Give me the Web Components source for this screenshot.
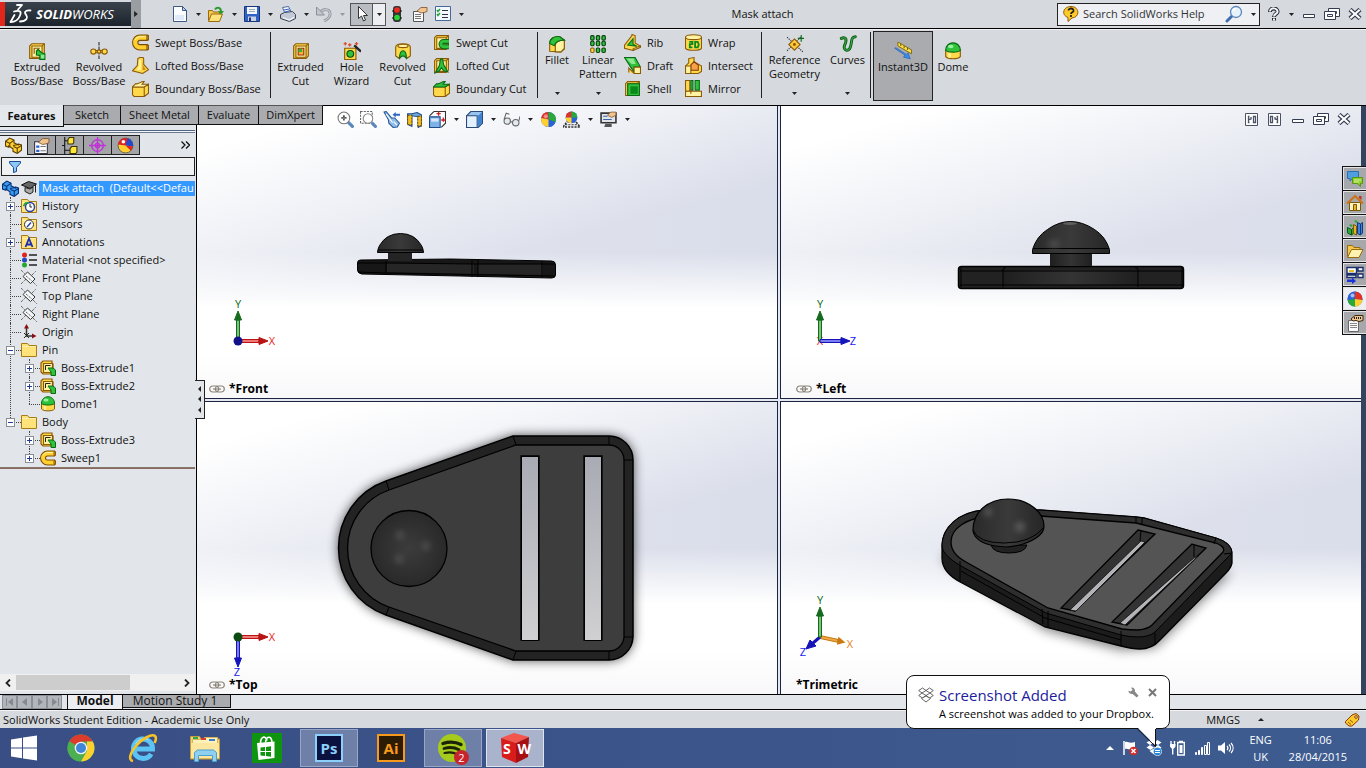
<!DOCTYPE html>
<html lang="en">
<head>
<meta charset="utf-8">
<title>Mask attach - SolidWorks</title>
<style>
html,body{margin:0;height:100%}
body{font:11px/14px "Open Sans","Noto Sans",sans-serif;color:#111;background:#d6d9dd;overflow:hidden}
</style>
</head>
<body>
<cad-app></cad-app>
<script>
/* ---------- helpers ---------- */
const RESET = `*{box-sizing:border-box}
button{font:inherit;color:inherit;background:none;border:0;padding:0;margin:0;text-align:center}
sw-icon{flex:none}`;
function define(tag, css, html) {
  customElements.define(tag, class extends HTMLElement {
    constructor() {
      super();
      const root = this.attachShadow({ mode: 'open' });
      const t = document.createElement('template');
      t.innerHTML = '<style>' + RESET + css + '</style>' + (typeof html === 'function' ? html(this) : html);
      root.appendChild(t.content.cloneNode(true));
    }
  });
}

/* ---------- icons ---------- */
const Y = 'fill="#ffd94a" stroke="#8b5a08"', YL = 'fill="#fff2a0" stroke="#8b5a08"', YD = 'fill="#d99a1c" stroke="#8b5a08"';
const G = 'fill="#2fc23a" stroke="#0a6a18"', N = 'fill="none"';
const BOX = `<path ${Y} d="M1.500 3.500l2-2h11v11l-2 2h-11z"/><path ${YL} d="M3.500 3.500h9v10h-9z"/><path ${N} stroke="#8b5a08" d="M12.500 3.500l2-2"/>`;
const FOLDER = `<path fill="#ffe27a" stroke="#a87b14" d="M.5 1.500h6l1.500 2h7.500v11H.5z"/><path fill="#fff0a8" d="M1 4h14v1H1z"/>`;
const HAND = `<path fill="#f0c48c" stroke="#7a5230" stroke-width=".8" d="M5 5l4-3.500h6v4l-3 1-3 .5-2-1z"/>`;
const ICONS = {
  down: [5, 3, '<path fill="#222" d="M0 0h5L2.500 3z"/>'],
  downg: [5, 3, '<path fill="#999" d="M0 0h5L2.500 3z"/>'],
  up: [6, 3, '<path fill="#222" d="M0 3h6L3 0z"/>'],
  upw: [8, 4, '<path fill="#fff" d="M0 4h8L4 0z"/>'],
  right: [5, 8, '<path fill="#222" d="M0 0v8l5-4z"/>'],
  left: [3, 6, '<path fill="#222" d="M3 0v6L0 3z"/>'],
  ds: [24, 24, '<g fill="none" stroke="#fff" stroke-width="1.800" stroke-linecap="round" stroke-linejoin="round"><path d="M8 3h5l-4 4.500"/><path d="M5 9.500c5-1.500 8-.5 6 4-1.500 4-5 6.500-9.500 6.500l4-7"/><path d="M21.500 8.500c-4-.5-6.500 1-5 3.500s2.500 3 1 5-4 2.500-6.500 2.500"/></g>'],
  extrude: [16, 16, BOX + `<path ${N} stroke="#8b5a08" d="M5.500 10.500v-5h5"/><path ${G} d="M7.500 8l1.500-1.500 3 3 3 1v5h-4.500v-3.500l-3-.5z"/><path fill="#8be88e" d="M11.500 11.500h3v3h-3z"/>`],
  revolve: [16, 16, '<path stroke="#333" stroke-dasharray="3 1" d="M8 0v16"/><g fill="#ffd94a" stroke="#8b5a08"><path d="M3 7.500h10v2H3z"/><circle cx="3" cy="8.500" r="2.300"/><circle cx="13" cy="8.500" r="2.300"/><circle cx="8" cy="8.500" r="1.500"/></g>'],
  sweep: [16, 16, `<path ${N} stroke="#7a4d06" stroke-width="6" d="M15 3.500H7.500a4.500 4.500 0 000 9H15"/><path ${N} stroke="#ffd030" stroke-width="4" d="M14.500 3.500H7.500a4.500 4.500 0 000 9h7"/><path ${N} stroke="#fff3a0" d="M13 2.500H7a5 5 0 00-4 3"/><path ${YD} d="M14 1.500h1.500v4H14zM14 10.500h1.500v4H14z"/>`],
  loft: [16, 16, `<path ${Y} d="M5.500 1.500l2-1h3l.5 1.500v5l4.500 5-5.500 3.500-9.500-2.500 4.500-5z"/><path fill="#fff3a0" d="M6.500 2.500h2V12l-4 .5 2-4z"/><path fill="#c98a10" d="M10 2.500v10l3-.5-2.500-4z"/>`],
  boundary: [16, 16, `<path ${Y} d="M.5 6.500h11v9H2l-1.500-1.500zM11.500 6.500l4-2.500v8.500l-4 3"/><path ${YL} d="M.5 6.500l3-3c3 1 5-3 8-2l-2 2.500h6l-4 2.500z"/>`],
  cutx: [16, 16, BOX + '<path fill="#f7b733" stroke="#9a2a10" d="M5.500 5.500h5v6h-5z"/><path fill="#2fb53a" d="M6 6h3v3H6z"/>'],
  hole: [16, 16, '<path fill="#ffd94a" stroke="#8b5a08" d="M1.500 5.500h10v10h-10z"/><circle cx="6.500" cy="10.500" r="3" fill="#2fc23a" stroke="#0a4d10"/><path stroke="#222" stroke-width="2" d="M10 3l6 5.500"/><path stroke="#e0401c" d="M2 0v3M.5 1.500h3M6 1v3M4.500 2.500h3M12 0v3M10.500 1.500h3"/>'],
  revcut: [16, 16, `<path ${Y} d="M1.500 4.500c0-4 13-4 13 0v8l-3 2-2-5h-3l-2 5-3-2z"/><ellipse cx="8" cy="3.500" rx="4.500" ry="1.500" ${YL}/><path ${G} d="M5 14.500c0-9 6-9 6 0l-2-2H7z"/>`],
  sweepcut: [16, 16, BOX + '<path fill="none" stroke="#0a6a18" stroke-width="4.600" d="M15 7h-5a2.500 2.500 0 000 5h5"/><path fill="none" stroke="#2fc23a" stroke-width="2.600" d="M15 7h-5a2.500 2.500 0 000 5h5"/>'],
  loftcut: [16, 16, BOX + `<path ${G} d="M7 2h2l1 5 4 7-4-1-2-3-2 3-4 2 4-7z"/>`],
  boundcut: [16, 16, `<path ${Y} d="M.5 6.500h11v9H2l-1.500-1.500zM11.500 6.500l4-2.500v8.500l-4 3"/><path ${G} d="M.5 6.500l3-3c3 1 5-3 8-2l-2 2.500h6l-4 2.500z"/>`],
  fillet: [16, 16, `<path ${Y} d="M1.500 14.500v-7c0-4 4-7 9-6l4 3v8l-3 2.500z"/><path ${YL} d="M6.500 15V9c0-2 2-4 8-4.500V12l-3 3z"/><path ${G} d="M1.500 7.500c0-4 4-7 9-6l4 3c-5 0-8 1.500-9 5z"/>`],
  pattern: [16, 16, [1, 6, 11].map(x => [0, 5, 11].map(y => `<rect x="${x + .5}" y="${y + .5}" width="3" height="4" rx="1" ${x === 1 && y === 11 ? 'fill="#ffd94a" stroke="#8b5a08"' : 'fill="#2fc23a" stroke="#0a4010"'}/>`).join('')).join('')],
  rib: [16, 16, `<path ${Y} d="M.5 10.500l7-9v-1l3 1v7l5 3-7 4-8-2z"/><path ${G} d="M3.500 10.500l5-6v5l3.500 2z"/><path ${YL} d="M8.500 14l7-3v1.500l-7 3z"/>`],
  draft: [16, 16, `<path ${G} d="M.5.5h10l5 9h-6v5z"/><path fill="#8be88e" d="M2 1.500h7l2 5H7z"/><path ${YL} d="M9.500 9.500h6v6h-6z"/><path ${Y} d="M9.500 15.500l-5-5v4"/>`],
  shell: [16, 16, BOX + `<path ${G} d="M3.500 3.500h11v11h-11z"/><path fill="#0a8a1c" d="M6 6h7v7H6z"/>`],
  wrap: [16, 16, `<path ${Y} d="M.5 2.500v11c2 2.500 13 2.500 15 0v-11"/><ellipse cx="8" cy="3" rx="7.500" ry="2.300" ${YL}/><path fill="none" stroke="#0a8a1c" stroke-width="1.700" d="M4 7.500h3v2H4.500v3H7M9.500 12.500v-5h2.500l1 2.500-1 2.500z"/>`],
  intersect: [16, 16, `<path ${Y} d="M.5 8.500l3-3v-4l5-1v4l7 4v5l-3 2H.5z"/><path fill="#f5a24a" stroke="#8b3a08" d="M5.500 7.500l3-3 4 3v5h-7z"/><path ${YL} d="M.5 8.500h5v7h-5z"/>`],
  mirror: [16, 16, `<path ${Y} d="M.5.5h4v10h-4z"/><path ${G} d="M5.500.5h2v9h-2zM9.500.5h4v9h-4z"/><path ${YL} d="M.5 10.500h15v5H.5zM5.500 8v5"/>`],
  refgeo: [16, 16, '<path stroke="#333" stroke-dasharray="1 1" d="M1 2l14 13M1 14L13 2"/><path fill="#ffc93a" stroke="#8b5a08" d="M7.500 3.500l5 5-5 5-5-5z"/><circle cx="7.500" cy="8.500" r="1.300" fill="#8b5a08"/><path stroke="#0a6a1c" d="M13.500 0v6M10.500 3h6"/>'],
  curves: [16, 16, '<path fill="none" stroke="#0b5c14" stroke-width="2.600" stroke-linecap="round" d="M2 3c5-2 5 2 3 6-2 5 4 6 5 2 2-5 0-9 4.500-9.500"/><path fill="none" stroke="#35a845" stroke-width="1" stroke-linecap="round" d="M2 3c5-2 5 2 3 6-2 5 4 6 5 2 2-5 0-9 4.500-9.500"/>'],
  instant: [16, 16, '<path fill="#ffe34a" stroke="#7a6208" stroke-width=".8" d="M3.500 0l12 7v3.500l-12-7z"/><path stroke="#7a6208" d="M6 1.500v2M9 3.500v2M12 5v2"/><path fill="#3a8ae8" stroke="#1a5ab0" stroke-width=".5" d="M.5 5.500l9 6-1 2 6 1.500-2-5.500-1.500 1.500-9.500-6z"/>'],
  dome: [16, 16, `<path ${Y} d="M1.500 7v6c2 2.500 11 2.500 13 0V7z"/><path ${G} d="M1.500 7.500c0-9 13-9 13 0-2 2-11 2-13 0z"/><ellipse cx="6" cy="4" rx="2.500" ry="1.500" fill="#9af29e"/><path fill="#fff3a0" d="M4 10h2v4H4z"/>`],
  newdoc: [16, 16, '<path fill="#fdfeff" stroke="#3d5a86" d="M1.500.5h9l4 4v11h-13z"/><path fill="#bcd2ee" stroke="#3d5a86" d="M10.500.5v4h4z"/><path fill="#dfeaf8" d="M3 9h9v5H3z"/>'],
  open: [16, 16, '<path fill="#f5c74a" stroke="#9a6a10" d="M.5 14.500v-10h4l1 1.500h6v3"/><path fill="#ffe27a" stroke="#9a6a10" d="M.5 15.500l3-7.500h11l-3 7.500z"/><path fill="none" stroke="#2a9a2e" stroke-width="2" d="M7 3.500c2-3 6-2 6 2"/><path fill="#2a9a2e" d="M10 5h6l-3 3.500z"/>'],
  save: [16, 16, '<path fill="#2f62c4" stroke="#16357c" d="M.5.5h15v15H.5z"/><path fill="#f4f7fc" d="M3 1h10v7H3z"/><path stroke="#9ab" d="M5 3.500h6M5 5.500h6"/><path fill="#c8d2e4" d="M4 10.500h8V15H4z"/><path fill="#16357c" d="M5 11.500h2V15H5z"/>'],
  print: [16, 16, '<path fill="#fff" stroke="#4a6a9a" d="M2.500 1.500l6-1 3 6-6 2z"/><path fill="#c3cad6" stroke="#3c4556" d="M.5 8.500l4-2 8-1 3 3v4l-6 3-9-3z"/><path fill="#fff" d="M3 11l6 2.500 5-2.500v1l-5 2.500-6-2.500z"/><path stroke="#2f62c4" d="M4 4l5-1M5 6l5-1.500"/>'],
  undo: [16, 16, '<path fill="none" stroke="#989ca4" stroke-width="3" d="M3.500 7c4-5 10-4 10.500 0 .5 3.500-2.500 6.500-6 8"/><path fill="none" stroke="#d6d9dd" d="M3.500 7c4-5 10-4 10.500 0 .5 3.500-2.500 6.500-6 8"/><path fill="#c3c6cc" stroke="#8b8f97" d="M.5 1v8h8z"/>'],
  pointer: [16, 16, '<path fill="#fff" stroke="#333" d="M4.500.5v12l3-2.500 2 5 2-1-2-4.500h4z"/>'],
  light: [16, 16, '<rect x="4" y="0" width="8" height="16" rx="3" fill="#333"/><circle cx="8" cy="4" r="2.800" fill="#f02a1e"/><circle cx="8" cy="11.500" r="2.800" fill="#26d436"/><path stroke="#111" d="M3 5h2M11 5h2M3 12h2M11 12h2"/>'],
  props: [16, 16, '<path fill="#fafafa" stroke="#555" d="M1.500 5.500h10v10h-10z"/><path stroke="#777" d="M3 8.500h6M3 10.500h6M3 12.500h6"/>' + HAND],
  options: [16, 16, '<path fill="#f4f8ff" stroke="#47689a" d="M.5.5h15v14H.5z"/><path stroke="#26a436" stroke-width="1.500" fill="none" d="M2 4l1 1.500L5 3M2 8l1 1.500L5 7"/><path stroke="#334" d="M7 4.500h6M7 8.500h6M7 11.500h6"/>'],
  helpball: [16, 16, '<path fill="#ffc928" stroke="#8b5a08" d="M8 .5c9 0 9 11 1 11.500l-4 3.500v-4C-2 9 0 .5 8 .5z"/><path fill="none" stroke="#222" stroke-width="1.800" d="M5.500 4.500c0-3 5.500-2.500 5 .5-.3 1.500-2.500 1-2.500 3M8 9v2"/>'],
  magnify: [18, 18, '<path stroke="#3f6fae" stroke-width="3" stroke-linecap="round" d="M2 16l5-5"/><circle cx="11" cy="7" r="5.500" fill="#e6f2fc" stroke="#5b86b8" stroke-width="1.300"/><path fill="none" stroke="#fff" stroke-width="1.500" d="M8 6c.5-1.500 2-2.500 3-2.500"/>'],
  help: [12, 14, '<path fill="none" stroke="#222a38" stroke-width="4" d="M2 5c0-5 8-4.500 7.500 0C9 7 6 7 6 10M6 11v2.500"/><path fill="none" stroke="#f4f6fa" stroke-width="2" d="M2 4.500c0-4.500 8-4 7.500.5C9 7 6 7 6 9.500M6 11.500v2"/>'],
  min: [12, 8, '<path fill="#fff" stroke="#333c50" d="M.5 4.500h11v3H.5z"/>'],
  restore: [16, 12, '<path fill="#fff" stroke="#333c50" d="M4.500.5h11v8h-11zM7.500 3.500h5v2h-5z"/><path fill="#fff" stroke="#333c50" d="M.5 3.500h11v8H.5zM3.500 6.500h5v2h-5z"/>'],
  close: [14, 12, '<path stroke="#333c50" stroke-width="4.400" d="M2 1.500l10 9M12 1.500l-10 9"/><path stroke="#fff" stroke-width="2.200" d="M2.300 1.800l9.400 8.400M11.700 1.800l-9.400 8.400"/>'],
  tileL: [13, 13, '<path fill="#fff" stroke="#4a5264" d="M.5.500h12v12H.5z"/><path fill="none" stroke="#4a5264" stroke-width="1.300" d="M4.500 3.500h-1v6h1M6 4v2l-2 .5M8.500 3.500h2v6h-2z"/>'],
  tileR: [13, 13, '<path fill="#fff" stroke="#4a5264" d="M.5.500h12v12H.5z"/><path fill="none" stroke="#4a5264" stroke-width="1.300" d="M8.500 3.500h1v6h-1M7 4v2l2 .5M2.500 3.500h2v6h-2z"/>'],
  part: [16, 16, '<path fill="#ffd030" stroke="#5a3d04" d="M.5 4l4-3 4 2v2.500l4 2V6.500l3 1v5l-4 3-4-2V11l-4-2.500v1.200L.5 8.500z"/><path fill="none" stroke="#5a3d04" d="M.5 4l4 2 4-3M4.500 6v3M7.500 8l5-1M11.500 10.500v4.500M8 9l3.500 1.500 4-2.500"/>'],
  partblue: [16, 16, '<path fill="#3a9cf0" stroke="#0a2f78" d="M.5 4l4-3 4 2v2.500l4 2V6.500l3 1v5l-4 3-4-2V11l-4-2.500v1.200L.5 8.500z"/><path fill="none" stroke="#0a2f78" d="M.5 4l4 2 4-3M4.500 6v3M7.500 8l5-1M11.500 10.500v4.500M8 9l3.500 1.500 4-2.500"/>'],
  cap: [16, 16, '<path fill="#666" stroke="#111" d="M.5 5l7-3.500 8 2.500-6.500 4.500z"/><path fill="#aaa" stroke="#222" d="M4 7.500v4l5 2.500 3-2V7L9 9z"/><path stroke="#222" d="M14.500 4.500v8"/>'],
  proptab: [16, 16, '<path fill="#fafafa" stroke="#334" d="M1.500 4.500h12v11h-12z"/><path fill="#2f62c4" d="M3 8h3v2H3zM3 12h3v2H3z"/><path stroke="#777" d="M7 9h5M7 13h5"/>' + HAND],
  config: [16, 16, `<path ${N} stroke="#111" d="M3.500 0v16M3.500 3.500H7M3.500 12.500H9M1 8h3"/><path fill="#ffe63a" stroke="#3a3204" d="M6.500 2.500l1.500-2h4v5l-1 1H6.500z"/><path fill="#ffe63a" stroke="#3a3204" d="M8.500 11l1.500-2h5v5l-1 1.500H8.500z"/>`],
  dimx: [16, 16, '<g fill="none" stroke="#c032d8" stroke-width="1.300"><circle cx="8" cy="8" r="5.500"/><circle cx="8" cy="8" r="2"/><path d="M8 0v16M0 8h16"/></g>'],
  ball: [16, 16, '<circle cx="8" cy="8" r="7" fill="#2a62d8"/><path fill="#e23222" d="M8 8L1.200 6.500A7 7 0 018 1z"/><path fill="#2aa83a" d="M8 8V1a7 7 0 016.500 9.500z"/><path fill="#2a62d8" d="M8 8l6.500 2.500A7 7 0 018 15z"/><path fill="#ffd030" d="M8 8v7a7 7 0 01-6.800-8.500z"/><circle cx="5.500" cy="5" r="2" fill="#fff" opacity=".45"/>'],
  ballb: [16, 16, '<circle cx="8" cy="8" r="7.500" fill="#2a62d8"/><path fill="#2a62d8" d="M8 8L.6 9A7.500 7.500 0 018 .5z"/><path fill="#e23222" d="M8 8V.5A7.500 7.500 0 0115.400 9z"/><path fill="#ffd030" d="M8 8l7.400 1A7.500 7.500 0 018 15.500z"/><path fill="#2aa83a" d="M8 8v7.500A7.500 7.500 0 01.6 9z"/><circle cx="5.500" cy="4.500" r="2" fill="#fff" opacity=".6"/>'],
  ballry: [16, 16, '<circle cx="8" cy="8" r="7" fill="#ffd030" stroke="#333" stroke-width=".6"/><path fill="#e02222" d="M8 8L1 7a7 7 0 017-6c3 0 4 3 4 4z"/><path fill="#2348c8" d="M8 8l2-7a7 7 0 015 8z"/><path fill="#e02222" d="M8 8l7 1-2 4z"/><circle cx="6" cy="4.500" r="1.700" fill="#fff"/>'],
  chevrons: [9, 8, '<path fill="none" stroke="#111" stroke-width="1.300" d="M.5.500L4 4 .5 7.500M5 .5L8.500 4 5 7.500"/>'],
  funnel: [12, 12, '<path fill="#8cc8f8" stroke="#1a4a9a" d="M.5.5h11v1.500L7.500 6.500v4l-3 1v-5L.5 2z"/>'],
  history: [16, 16, FOLDER + '<circle cx="9" cy="9" r="4.500" fill="#fff" stroke="#2440b0" stroke-width="1.400"/><path fill="none" stroke="#222" d="M9 6v3h2"/><path fill="none" stroke="#18a02a" stroke-width="1.500" d="M2.500 8l2-3 3 0"/>'],
  sensors: [16, 16, FOLDER + '<circle cx="8" cy="8.500" r="4.500" fill="#fff" stroke="#333"/><path stroke="#2440b0" stroke-width="1.400" d="M6 11l4-4.500"/>'],
  annot: [16, 16, FOLDER + '<path fill="none" stroke="#1a2fb4" stroke-width="1.800" d="M4.500 13L8 4.500l3.500 8.500M6 10.500h4"/>'],
  folder: [16, 16, FOLDER],
  material: [16, 16, '<circle cx="3.500" cy="3" r="2.500" fill="#e02222"/><circle cx="3.500" cy="8" r="2.500" fill="#2348c8"/><circle cx="3.500" cy="13" r="2.500" fill="#25a832"/><path stroke="#222" stroke-width="1.500" d="M8 3h8M8 8h8M8 13h8"/>'],
  plane: [16, 16, '<path fill="#f4f6f8" stroke="#333" d="M6.500 2L14 9l-4.500 4.500L2 6.500z"/><path fill="none" stroke="#333" stroke-dasharray="1 1" d="M0 0l4 4M5 6l6 5M12 12l4 4M0 14l5-5M11 5l4-4"/>'],
  origin: [16, 16, '<path fill="none" stroke="#333" stroke-width="1.500" d="M5.500 4v8H13"/><path fill="#8b1010" d="M5.500 0L8 4.500H3zM15.500 12l-4.500 2.500v-5z"/><path stroke="#222" d="M3 9l5 5M3 14l5-5"/>'],
  boss: [16, 16, `<path ${Y} stroke-width="1.200" d="M1 3l2-2h9v2l1 1v8l-2 2H3l-2-2z"/><path ${YL} stroke-width="1.200" d="M3.500 3.500h9v9h-9z"/><path ${G} d="M8 8h5l2.500 2v5.500H11V12z"/><path fill="none" stroke="#222" d="M5.500 10V5.500h5"/>`],
  zoomfit: [16, 16, '<circle cx="6.500" cy="6.500" r="5.500" fill="#fff" stroke="#777"/><path stroke="#222" stroke-width="1.300" stroke-dasharray="2 1" d="M4 6.500h5M6.500 4v5"/><path stroke="#5a86bc" stroke-width="3" d="M10.500 10.500l5 5"/>'],
  zoomarea: [16, 16, '<path fill="none" stroke="#666" stroke-dasharray="2 1" d="M.5.5h11v11H.5z"/><circle cx="7.500" cy="7" r="4.500" fill="#fff" stroke="#888"/><path stroke="#5a86bc" stroke-width="3" d="M11 11l4.500 4.500"/>'],
  prevview: [16, 16, '<path fill="#8fbce8" stroke="#2a5a9a" d="M1 1l2-.5 5 6 3 0 4.500 5-2 3.500-4 .5-4-4-.5-3.500z"/><path fill="none" stroke="#fff" d="M3 3l6 8M10 10l3 3"/><path fill="#2f68c8" d="M9 3.500L12 1v1.500h4v2h-4V6z"/>'],
  section: [16, 16, '<path fill="#6fa8dc" stroke="#1a4a8a" d="M1.500 2.500h4l5-1 4 2v10l-3 2v-10l-6-1v10l-4-2z"/><path fill="#f0c020" stroke="#6a4a08" stroke-dasharray="2 1" d="M1.500 4h4v9h-4zM11 5h3.500v9H11z"/>'],
  orient: [16, 16, '<path fill="#fff" stroke="#333" d="M4.500.5h11v11l-4 4M.5 4.500l4-4"/><path fill="#7fb2e8" stroke="#1a4a8a" d="M.5 5.500h10v10H.5z"/><path stroke="#d02020" stroke-width="1.300" d="M7 2.500h4M9 .5v4M11.500 8.500h4M13.500 6v4"/><path fill="#d4e6fa" d="M2 7h7v3H2z"/>'],
  display: [16, 16, '<path fill="#9ac4f0" stroke="#2a4a7a" d="M.5 4.500l4-4h11v11l-4 4H.5z"/><path fill="#e4f0fc" stroke="#2a4a7a" d="M.5 4.500h10v11H.5z"/><path fill="#3f82d0" d="M11 5l4-4v10l-4 4z"/>'],
  glasses: [16, 16, '<g fill="#e4eaf2" stroke="#666"><circle cx="4" cy="9.500" r="3"/><circle cx="12" cy="11" r="3"/><path fill="none" d="M7 10l2 .5M1 8l2-6 3 1M15 9l1-4"/></g>'],
  scene: [16, 16, '<path fill="none" stroke="#333" stroke-width="1.500" stroke-dasharray="2 1" d="M0 15l4-5h8l4 5z"/><circle cx="8" cy="6" r="5.500" fill="#2a62d8"/><path fill="#e23222" d="M8 6H2.500A5.500 5.500 0 018 .5z"/><path fill="#2aa83a" d="M8 6V.5A5.500 5.500 0 0113.500 6z"/><path fill="#ffd030" d="M8 6v5.500A5.500 5.500 0 012.500 6z"/><path fill="none" stroke="#333" stroke-dasharray="2 1" d="M2 13h12"/>'],
  screen: [16, 16, '<path fill="#dfe3ea" stroke="#333" stroke-width="1.500" d="M1 2h14v9H1z"/><path fill="#555" d="M5 12h6v3H4z"/><path stroke="#3a62a8" d="M3 5h4M3 8h8"/><path fill="#f0c48c" stroke="#7a5230" stroke-width=".7" d="M7 4l3-3h5v3l-4 2z"/>'],
  chain: [16, 8, '<g fill="none" stroke="#8a8478" stroke-width="1.200"><rect x=".7" y="1" width="9" height="6" rx="3"/><rect x="6.300" y="1" width="9" height="6" rx="3"/><path d="M4 4h8"/></g>'],
  forum: [18, 18, '<path fill="#4f9fe0" stroke="#2a6fb0" d="M1.500 1.500h11v7h-6l-2.500 2.500V8.500H1.500z"/><path fill="#8fcf2a" stroke="#5a9410" d="M6.500 7.500h10v6h-2v3l-3-3h-5z"/><path stroke="#d6f0a0" d="M8 10h7M8 12h5"/>'],
  home: [18, 18, '<path fill="#fff4c0" stroke="#7a5a08" d="M3.500 8.500h11v8h-11z"/><path fill="none" stroke="#d07010" stroke-width="2" d="M1 9.500L9 2l8 7.500"/><path fill="#c03020" d="M13 2h2.500v4L13 4z"/><path fill="#f0b020" stroke="#7a5a08" d="M7.500 10.500h3v6h-3z"/>'],
  library: [18, 18, '<path fill="#2aa83a" stroke="#0a5a14" d="M1.500 9.500l4 2v5.500l-4-2zM5.500 11.500l2-2v6l-2 1.500"/><path fill="#f0b020" stroke="#7a5a08" d="M7.500 6.500l3 1.500v9l-3-1.500z"/><path fill="#3f82e0" stroke="#12397c" d="M11.500 4.500l3 1.500v11l-3-1.500zM14.500 6l2-1.500V15l-2 2"/><path fill="#2aa83a" d="M3 7l2-1 2 2-2 1zM8 3l2-1 2 2-2 1z"/>'],
  explorer: [18, 18, '<path fill="#f5c74a" stroke="#9a6a10" d="M1.500 15V3.500h5l1.500 2h6v3"/><path fill="#fff2b0" stroke="#9a6a10" d="M1.500 15.500l4-8h11.500l-4 8z"/>'],
  palette: [18, 18, '<path fill="#fff" stroke="#1a2f6a" stroke-width="1.400" d="M1 1.500h9.500v6H1zM12 1.500h5v3.500h-5zM12 8h5v3.500h-5zM1 9h9v2.500H1z"/><path fill="#e0c020" d="M3 4h5v2H3z"/><path fill="#1a32d8" d="M1 13.500h5V11.500l4 3.500-4 3v-2H1z"/>'],
  propsheet: [18, 18, '<path fill="#fafafa" stroke="#666" d="M2.500 6.500h10v11h-10z"/><path stroke="#888" d="M4 9.500h7M4 11.500h7M4 13.500h7"/><path fill="#f0c48c" stroke="#3a2a10" d="M5 5l4-3.500h8v5l-4 1-3-1-3 .5z"/><path stroke="#222" stroke-width="2" stroke-dasharray="1 1" d="M8 4h7"/>'],
  sleft: [6, 8, '<path fill="none" stroke="#222" stroke-width="1.800" d="M5 .5L1.500 4 5 7.500"/>'],
  sright: [6, 8, '<path fill="none" stroke="#222" stroke-width="1.800" d="M1 .5L4.500 4 1 7.500"/>'],
  first: [8, 8, '<path fill="#858991" d="M7 0v8L2 4zM0 0h1v8H0z"/>'],
  prev: [8, 8, '<path fill="#858991" d="M6 0v8L1 4z"/>'],
  next: [8, 8, '<path fill="#858991" d="M2 0v8l5-4z"/>'],
  last: [8, 8, '<path fill="#858991" d="M1 0v8l5-4zM7 0h1v8H7z"/>'],
  tag: [16, 14, '<path fill="#ffc928" stroke="#8b3a08" d="M1.500 8.500L8 2l4-1.500 3 2.500-.5 4-6.500 6H5l-3.500-3z"/><circle cx="12" cy="4" r="1.300" fill="#fff" stroke="#8b3a08"/><path stroke="#8b5a08" d="M4 9l3 2.500M6 7l3 2.500"/>'],
  dropbox: [16, 16, '<g fill="#fff" stroke="#555" stroke-width=".9"><path d="M4.500 1L8 3.500 4 6 .7 3.500z"/><path d="M11.500 1L15.300 3.500 12 6 8 3.500z"/><path d="M4 6l4 2.500L4.500 11 .7 8.500z"/><path d="M12 6l3.300 2.500L11.500 11 8 8.500z"/><path d="M3.500 11.500L8 9l4.500 2.500L8 15z"/></g>'],
  wrench: [12, 12, '<path fill="#888" d="M4 .5a3.500 3.500 0 013.500 4.500l4 4.500-2 2-4.500-4A3.500 3.500 0 01.500 4L3 5l2-2-1.500-2z"/>'],
  x: [9, 9, '<path stroke="#777" stroke-width="2" d="M1 1l7 7M8 1L1 8"/>'],
  windows: [28, 28, '<path fill="#fff" d="M1 5.500l11-1.700v9.700H1zM13 3.600L27 1.500v12H13zM1 14.500h11v9.700L1 22.500zM13 14.500h14v12l-14-2z"/>'],
  chrome: [30, 30, '<circle cx="15" cy="15" r="13.500" fill="#4caf50"/><path fill="#dd3b2c" d="M15 15L3.300 8.200A13.500 13.500 0 0126.800 8.500H15z"/><path fill="#fbd02f" d="M15 28.500L21 18l0-9.500h5.800A13.500 13.500 0 0115 28.500z"/><path fill="#4caf50" d="M3.300 8.200l5.700 10 6 3.500-1.500 6.800A13.500 13.500 0 013.300 8.200z"/><circle cx="15" cy="15" r="6.300" fill="#f2f2f2"/><circle cx="15" cy="15" r="5" fill="#3f86d8"/>'],
  ie: [30, 30, '<path fill="none" stroke="#5cc4f4" stroke-width="5" d="M6 16h18.500A9.500 9.500 0 106.200 19a9.500 9.500 0 0017 2"/><path fill="none" stroke="#a8e4fc" d="M7.500 11a9 9 0 0113-4"/><path fill="none" stroke="#f7c325" stroke-width="2.600" d="M5 28c-5-1-3-8 3-15C14 5.500 24 .5 27 3c1.500 1.500 1 4-.5 7"/>'],
  files: [32, 30, '<path fill="#f2d47c" stroke="#c99c3a" d="M1.500 26V3.500h9l1.500 2.500h18.500V26z"/><path fill="#fdf0b8" stroke="#d8b45a" d="M3.500 6.500h12v-2h13v20h-25z"/><path fill="#2fa84a" d="M4 4h5v2H4z"/><path fill="#d84030" d="M12 5h5v2h-5z"/><path fill="#3a80d0" d="M20 6h6v2h-6z"/><path fill="#fbe7a0" d="M2 10h28v15H2z"/><path fill="#8fd0f0" stroke="#4aa0d0" d="M5.500 28.500v-9l3-2.500h16l3 2.500v9h-4v-6h-14v6z"/>'],
  store: [30, 30, '<path fill="#0f9410" d="M0 0h30v30H0z"/><path fill="#fff" d="M5 10l17.500-1.500V25L6.500 27z"/><path fill="none" stroke="#fff" stroke-width="1.600" d="M8.500 10.500c0-7 5-8.500 6.500-3M13.500 9.500c1-7 6-7 6.500 0"/><path fill="#0f9410" d="M8.500 14.500l4.500-.5v4H8.500zM14 13.900l5-.6v4.700h-5zM8.500 19H13v4l-4.500-.5zM14 19h5v4.700l-5-.6z"/>'],
  spotify: [30, 30, '<circle cx="14" cy="15" r="14" fill="#a5cc1c"/><g fill="none" stroke="#1c2408" stroke-linecap="round"><path stroke-width="3.400" d="M5 10.500c6-2 13-1.500 18 1"/><path stroke-width="2.800" d="M6 15.500c5-1.500 11-1 15 1.200"/><path stroke-width="2.200" d="M6.500 20c4-1 9-.8 12 1"/></g>'],
  swcube: [32, 32, '<path fill="#f2564c" d="M2 6l13-5 15 4-13 6z"/><path fill="#d81c1c" d="M2 6l15 5v20L3 25z"/><path fill="#a80f12" d="M17 11l13-6-1 20-12 6z"/>'],
  flag: [16, 16, '<path stroke="#fff" stroke-width="1.500" d="M2 1v14"/><path fill="#fff" d="M3 2c3-1 4 2 10 0v7C8 11 6 8 3 9z"/><circle cx="11.500" cy="11" r="4.300" fill="#d42a2a"/><path stroke="#fff" stroke-width="1.500" d="M9.500 9l4 4M13.500 9l-4 4"/>'],
  dbtray: [16, 16, '<path fill="#fff" d="M4.500 0L8 2.500 4 5 .5 2.500zM11.500 0L15.500 2.500 12 5 8 2.500zM4 5l4 2.500L4.500 10 .5 7.500zM12 5l3.500 2.500-4 2.500L8 7.500zM3.500 11L8 8.500l4.500 2.500L8 14.500z"/><circle cx="11.500" cy="11.500" r="4.200" fill="#2a86d8" stroke="#fff" stroke-width=".6"/><path stroke="#fff" d="M9 10.500h5M9 12.500h5"/>'],
  battery: [16, 16, '<path fill="none" stroke="#fff" stroke-width="1.400" d="M7.700 2.500h6.600v12.500H7.700zM9 1.500h4M1 1v4M4.500 1v4M2.700 8v6.500"/><path fill="#fff" d="M0 4h5.500v2.500L4 8.500H1.500L0 6.500zM9.500 5h3v8h-3z"/>'],
  signal: [16, 16, '<path fill="#fff" stroke="#fff" d="M1.500 12.500h1v2h-1zM4.500 10.500h1v4h-1zM7.500 7.500h1v7h-1z"/><path fill="none" stroke="#fff" d="M10.500 5.500h2v9h-2zM13.500 2.500h2v12h-2z"/>'],
  volume: [16, 16, '<path fill="#fff" d="M0 5.500h3L7 2v12l-4-3.500H0z"/><path fill="none" stroke="#fff" stroke-width="1.200" d="M9 6c1 1.200 1 3 0 4M11 4.500c2 2 2 5 0 7M13 3c2.800 3 2.800 7 0 10"/>']
};
class SwIcon extends HTMLElement {
  constructor() {
    super();
    const d = ICONS[this.getAttribute('name')], s = this.getAttribute('size');
    const w = s ? +s : d[0], h = s ? Math.round(s * d[1] / d[0]) : d[1];
    this.attachShadow({ mode: 'open' }).innerHTML =
      `<style>:host{display:block}svg{display:block}</style><svg aria-hidden="true" width="${w}" height="${h}" viewBox="0 0 ${d[0]} ${d[1]}">${d[2]}</svg>`;
  }
}
customElements.define('sw-icon', SwIcon);
const ic = (n, s) => `<sw-icon name="${n}"${s ? ` size="${s}"` : ''}></sw-icon>`;

/* ---------- title bar ---------- */
define('icon-button', `
:host{display:block}
button{display:grid;place-items:center;width:100%;height:100%}
`, el => `<button type="button" aria-label="${el.getAttribute('label')}">${ic(el.getAttribute('icon'), el.getAttribute('size'))}</button>`);
const ib = (icon, label, size) => `<icon-button icon="${icon}" label="${label}"${size ? ` size="${size}"` : ''}></icon-button>`;

define('title-bar', `
:host{display:grid;grid-template-columns:auto 1fr auto;height:29px;border-bottom:1px solid #000;background:#d6d9dd;align-items:stretch}
.left,.right,.logo{display:flex;align-items:center}
.logo{width:131px;background:linear-gradient(#3a424d,#1c232b);border-left:5px solid #e1261c;padding-left:4px;gap:3px;color:#fff;font-size:13px;font-style:italic}
.more{width:10px;height:100%;background:#9a9da2;display:grid;place-items:center;margin-right:28px}
.left icon-button{width:22px;height:24px}
.left icon-button.dd{width:14px}
.left icon-button.wide{width:24px}
.select{display:flex;border:1px solid #555;height:23px;align-items:center;margin:0 0 0 1px;background:#eceef1}
.select icon-button:first-child{background:#b9bcc1;border-right:1px solid #555;height:21px;width:22px}
.select icon-button.dd{width:12px}
h1{font:inherit;margin:0;text-align:center;align-self:center}
.search{display:flex;align-items:center;width:203px;height:23px;border:1px solid #222;background:#eef0f3;padding-left:5px;gap:4px}
.search input{flex:1;min-width:0;border:0;background:none;font:inherit;padding:0;outline:0}
.search input::placeholder{color:#333;opacity:1}
.search icon-button{width:22px}.search .dd{width:9px;margin-right:1px}
.right icon-button.h{width:22px;margin-left:3px}
.right icon-button.hd{width:12px}
.right icon-button.w{width:23px}
`, `
<div class="left"><div class="logo">${ic('ds')}<span><b>SOLID</b>WORKS</span></div>
<button class="more" aria-label="Menu">${ic('right', 4)}</button>
${ib('newdoc', 'New')}<icon-button class="dd" icon="down" label="New options"></icon-button>
${ib('open', 'Open')}<icon-button class="dd" icon="down" label="Open options"></icon-button>
${ib('save', 'Save')}<icon-button class="dd" icon="down" label="Save options"></icon-button>
${ib('print', 'Print')}<icon-button class="dd" icon="down" label="Print options"></icon-button>
${ib('undo', 'Undo')}<icon-button class="dd" icon="downg" label="Undo options"></icon-button>
<div class="select">${ib('pointer', 'Select')}<icon-button class="dd" icon="down" label="Select options"></icon-button></div>
${ib('light', 'Rebuild')}<icon-button class="wide" icon="props" label="File properties"></icon-button>${ib('options', 'Options')}<icon-button class="dd" icon="down" label="More options"></icon-button></div>
<h1>Mask attach</h1>
<div class="right"><div class="search">${ic('helpball')}<input type="search" aria-label="Search SolidWorks Help" placeholder="Search SolidWorks Help">
${ib('magnify', 'Search')}<icon-button class="dd" icon="down" label="Search options"></icon-button></div>
<icon-button class="h" icon="help" label="Help"></icon-button><icon-button class="hd" icon="down" label="Help options"></icon-button>
<icon-button class="w" icon="min" label="Minimise"></icon-button><icon-button class="w" icon="restore" label="Restore"></icon-button><icon-button class="w" icon="close" label="Close"></icon-button></div>`);

/* ---------- ribbon ---------- */
define('tool-button', `
:host{display:block}
button{display:flex;flex-direction:column;align-items:center;width:100%;height:70px;line-height:14px;padding-top:11px;white-space:nowrap}
:host([high]) button{padding-top:4px}
:host([active]) button{background:#a9abaf;border:1px solid #222;padding-top:10px}
:host([small]) button{flex-direction:row;height:23px;padding:0;gap:6px}
sw-icon[name=down]{margin-top:auto;margin-bottom:6px}
`, el => `<button type="button">${ic(el.getAttribute('icon'), el.hasAttribute('small') ? 17 : 18)}<span><slot></slot></span>${el.hasAttribute('menu') ? ic('down') : ''}</button>`);
const tb = (icon, text, attr = '') => `<tool-button icon="${icon}" ${attr}>${text}</tool-button>`;

define('cad-ribbon', `
:host{display:flex;height:77px;padding:1px 0 0 6px;border-bottom:1px solid #000;background:#d6d9dd;border-top:1px solid #f2f2f4}
.g{display:grid}
.col{display:grid;grid-auto-rows:23px;justify-items:start}
.sep{width:1px;background:#222;height:66px;margin-top:1px}
.boss{grid-template-columns:62px 62px 140px}
.cut{grid-template-columns:51px 51px 51px 109px;margin-left:4px}
.boss .col{padding-left:2px}
.cut .col{padding-left:5px}
.mod{grid-template-columns:36px 46px 61px 79px;margin-left:1px}
.mod .col{padding-left:3px}
.ref{grid-template-columns:61px 45px;margin-left:2px}
.inst{grid-template-columns:60px 40px;margin-left:2px}
`, `
<div class="g boss">${tb('extrude', 'Extruded<br>Boss/Base')}${tb('revolve', 'Revolved<br>Boss/Base')}
<div class="col">${tb('sweep', 'Swept Boss/Base', 'small')}${tb('loft', 'Lofted Boss/Base', 'small')}${tb('boundary', 'Boundary Boss/Base', 'small')}</div></div>
<div class="sep"></div>
<div class="g cut">${tb('cutx', 'Extruded<br>Cut')}${tb('hole', 'Hole<br>Wizard')}${tb('revcut', 'Revolved<br>Cut')}
<div class="col">${tb('sweepcut', 'Swept Cut', 'small')}${tb('loftcut', 'Lofted Cut', 'small')}${tb('boundcut', 'Boundary Cut', 'small')}</div></div>
<div class="sep"></div>
<div class="g mod">${tb('fillet', 'Fillet', 'high menu')}${tb('pattern', 'Linear<br>Pattern', 'high menu')}
<div class="col">${tb('rib', 'Rib', 'small')}${tb('draft', 'Draft', 'small')}${tb('shell', 'Shell', 'small')}</div>
<div class="col">${tb('wrap', 'Wrap', 'small')}${tb('intersect', 'Intersect', 'small')}${tb('mirror', 'Mirror', 'small')}</div></div>
<div class="sep"></div>
<div class="g ref">${tb('refgeo', 'Reference<br>Geometry', 'high menu')}${tb('curves', 'Curves', 'high menu')}</div>
<div class="sep"></div>
<div class="g inst">${tb('instant', 'Instant3D', 'active')}${tb('dome', 'Dome')}</div>`);

define('command-tabs', `
:host{display:flex;align-items:flex-start}
button{height:20px;padding:0;background:#a9abaf;border:1px solid #111;border-left:0;white-space:nowrap;border-top-color:#555}
button.on{height:22px;font-weight:700;background:#e4e7eb;border-top:0}
`, ['Features', 'Sketch', 'Sheet Metal', 'Evaluate', 'DimXpert'].map((t, i) =>
  `<button type="button"${i ? '' : ' class="on"'} style="width:${[64, 57, 78, 60, 64][i]}px">${t}</button>`).join(''));

/* ---------- feature manager ---------- */
define('tree-item', `
:host{display:block;position:relative}
.row{position:relative;display:flex;align-items:center;height:18px;white-space:nowrap}
.exp{width:21px;height:18px;flex:none;position:relative}
.exp::before{content:"";position:absolute;left:10px;right:0;top:9px;border-top:1px dotted #444}
.exp button{position:absolute;left:6px;top:5px;width:9px;height:9px;border:1px solid #8a8f98;background:
 linear-gradient(#223a9a,#223a9a) center/5px 1px no-repeat,#fff}
.exp button.plus{background:linear-gradient(#223a9a,#223a9a) center/5px 1px no-repeat,linear-gradient(#223a9a,#223a9a) center/1px 5px no-repeat,#fff}
.label{margin-left:5px}
.kids{padding-left:19px}
:host::before{content:"";position:absolute;left:10px;top:0;bottom:0;border-left:1px dotted #444}
:host([last])::before{bottom:auto;height:9px}
`, el => {
  const s = el.getAttribute('state'), text = el.getAttribute('label').replace(/</g, '&lt;');
  return `<div class="row"><span class="exp">${s ? `<button class="${s}" aria-label="Toggle ${text}"></button>` : ''}</span>${ic(el.getAttribute('icon'), 16)}<span class="label">${text}</span></div><div class="kids"><slot></slot></div>`;
});
const ti = (icon, label, state, kids = '', last) => `<tree-item icon="${icon}" label="${label}"${state ? ` state="${state}"` : ''}${last ? ' last' : ''}>${kids}</tree-item>`;

define('feature-manager', `
:host{display:flex;flex-direction:column;background:#e2e6ea;border-right:1px solid #000;padding-top:24px;position:relative}
.tabs{display:flex;height:25px;border-top:1px solid #4f6382;padding-top:4px;box-shadow:inset 0 1px #f4f6f8,inset 0 2px #6a7890;align-items:stretch;margin-right:1px}
.tabs icon-button{width:28px;background:#a2a4a8;border:1px solid #222;border-left:0}
.tabs icon-button.on{background:#e6e9ed;border-bottom:0}
.tabs .more{margin-left:auto;background:none;border:0;width:20px}
.filter{display:flex;align-items:center;margin:2px 1px 3px 1px;height:19px;border:1px solid #222;background:#f0f1f3;padding-left:7px;gap:5px}
.filter input{flex:1;min-width:0;border:0;background:none;font:inherit;outline:0}
.root{display:flex;align-items:center;height:18px;padding-left:2px;gap:2px;overflow:hidden}
.root b{font-weight:400;flex:1;background:#3399ff;color:#fff;padding-left:3px;white-space:pre;height:15px;margin-right:1px}
.end{border-top:1px solid #857770;border-bottom:1px solid #8b6a5a;margin-right:1px}
.scroll{margin-top:auto;height:17px;display:flex;align-items:center;background:#f0f0f0;margin-bottom:3px;margin-right:1px}
.scroll icon-button{width:16px}
.scroll i{flex:1}.scroll i::before{content:"";display:block;width:70%;height:15px;background:#cdcdcd}
.handle{position:absolute;right:-9px;top:274px;width:10px;height:39px;border:1px solid #222;border-left:0;background:#e2e6ea;display:grid;place-items:center;padding:3px 0;z-index:2}
`, `
<div class="tabs"><icon-button class="on" icon="part" label="FeatureManager" size="17"></icon-button>${ib('proptab', 'PropertyManager', 17)}${ib('config', 'ConfigurationManager', 17)}${ib('dimx', 'DimXpertManager', 17)}${ib('ballry', 'DisplayManager', 17)}<icon-button class="more" icon="chevrons" label="More tabs"></icon-button></div>
<label class="filter">${ic('funnel')}<input type="text" aria-label="Filter"></label>
<div class="root">${ic('partblue', 17)}${ic('cap', 16)}<b>Mask attach  (Default&lt;&lt;Defau</b></div>
${ti('history', 'History', 'plus')}${ti('sensors', 'Sensors')}${ti('annot', 'Annotations', 'plus')}${ti('material', 'Material &lt;not specified&gt;')}
${ti('plane', 'Front Plane')}${ti('plane', 'Top Plane')}${ti('plane', 'Right Plane')}${ti('origin', 'Origin')}
${ti('folder', 'Pin', 'minus', ti('boss', 'Boss-Extrude1', 'plus') + ti('boss', 'Boss-Extrude2', 'plus') + ti('dome', 'Dome1', '', '', 1))}
${ti('folder', 'Body', 'minus', ti('boss', 'Boss-Extrude3', 'plus') + ti('sweep', 'Sweep1', 'plus', '', 1), 1)}
<div class="end"></div>
<div class="scroll">${ib('sleft', 'Scroll left')}<i></i>${ib('sright', 'Scroll right')}</div>
<button class="handle" aria-label="Collapse panel">${ic('left')}${ic('left')}${ic('left')}</button>`);

/* ---------- viewports ---------- */
const ARROW = (x, y, ang, light, dark) => `<g transform="translate(${x} ${y}) rotate(${ang})" stroke-width="1"><path fill="${light}" stroke="${dark}" d="M0 -1.500h21v3H0z"/><path fill="${dark}" stroke="${dark}" d="M21 -3.500l9 3.500-9 3.500z"/></g>`;
const TXT = (x, y, c, t) => `<text x="${x}" y="${y}" fill="${c}" font-size="11" text-anchor="middle">${t}</text>`;
const GR = ['#7cc27c', '#156b1c'], RD = ['#f07878', '#b81414'], BL = ['#7c7cf0', '#1414b8'];
const TRIADS = {
  front: ARROW(20, 41, -90, ...GR) + ARROW(20, 41, 0, ...RD) + '<circle cx="20" cy="41" r="4.500" fill="#10108a"/>' + TXT(20, 8, '#0a6a18', 'Y') + TXT(54, 45, '#f01818', 'X'),
  left: TXT(20, 45, '#f01818', 'X') + ARROW(20, 41, -90, ...GR) + ARROW(20, 41, 0, ...BL) + TXT(20, 8, '#0a6a18', 'Y') + TXT(53, 45, '#1818f0', 'Z'),
  top: ARROW(20, 41, 90, ...BL) + ARROW(20, 41, 0, ...RD) + '<circle cx="20" cy="41" r="4.500" fill="#0d4a12"/>' + TXT(54, 45, '#f01818', 'X') + TXT(19, 80, '#1818f0', 'Z'),
  tri: '<g transform="translate(20 41) rotate(12)"><path fill="#f0a848" stroke="#c87a10" d="M0-1.500h18v3H0z"/><path fill="#c87a10" d="M18-4l8 4-8 4z"/></g><path stroke="#1414b8" stroke-width="3" d="M20 41l-7 6"/><path fill="#1414b8" stroke="#1414b8" d="M6 53l4-9 6 6z"/>' + ARROW(20, 41, -90, ...GR) + TXT(20, 8, '#0a6a18', 'Y') + TXT(50, 52, '#e88010', 'X') + TXT(3, 60, '#1818f0', 'Z')
};
const OUT = 'M513 436H609A24 24 0 01633 460V637A24 24 0 01609 660H513L386 615A71 71 0 01386 481z';
const INN = 'M516 445H609A15 15 0 01624 460V637A15 15 0 01609 651H516L389 607A62 62 0 01389 490z';
const MODELS = {
  front: ['197 106 580 292', `<path fill="#171717" stroke="#000" d="M357.500 263q0-3 3-3l90-1 101 2q4 0 4 4v10q0 3-4 3l-92-2-98-2q-4-1-4-4z"/>
<path fill="#262626" d="M387 263l87 1v10l-87-2zM478 264h65v11l-65-1z"/><path fill="none" stroke="#000" d="M358 263h28l88 1h81M386 261v12M472 260v17M478 260v17M542 261v17M358 272l28 1 168 3"/>
<path fill="#242424" d="M388 252h24v9h-24z"/><path fill="url(#dm)" stroke="#000" d="M377.500 252.500q0-3 2-7 7-12 21-12t21 12q2 4 2 7z"/><path stroke="#000" d="M378 250h45"/>`],
  left: ['781 106 580 292', `<rect x="958.500" y="266.500" width="225" height="22" rx="3" fill="#222" stroke="#000" stroke-width="1.500"/><path fill="url(#sl)" d="M1003 270h135v15h-135z"/>
<path fill="none" stroke="#000" d="M960 271h223M960 285h223M961 268v19M1182 268v19M1003 287v-18l3-2M1138 287v-18l-3-2"/>
<path fill="url(#sl)" d="M1050 253h42v13h-42z"/><path fill="url(#dm)" stroke="#000" d="M1032.500 253.500v-4q4-13 15-20 11-8 23-8t24 8q11 7 15 20v4z"/><path fill="none" stroke="#000" d="M1033 248.500h76"/><ellipse cx="1054" cy="244" rx="6" ry="4" fill="#777" opacity=".4" filter="url(#b2)"/><ellipse cx="1070" cy="223.500" rx="7" ry="1.500" fill="#999" opacity=".4"/>`],
  top: ['197 402 580 292', `<path fill="#000" opacity=".75" filter="url(#b6)" d="${OUT}"/>
<path fill="#232323" stroke="#000" stroke-width="1.500" fill-rule="evenodd" d="${OUT}M521 456v184h18V456zM584 456v184h18V456z"/>
<path fill="#3d3d3d" stroke="#000" stroke-width="1.300" fill-rule="evenodd" d="${INN}M521 456v184h18V456zM584 456v184h18V456z"/>
<path fill="url(#slot)" stroke="#000" d="M521.500 456.500h17v184h-17zM584.500 456.500h17v184h-17z"/>
<path stroke="#000" d="M386 481l3 9M386 615l3-8M513 436l3 9M513 660l3-9M609 436v9M609 660v-9M633 460h-9M633 637h-9"/>
<circle cx="409" cy="548.500" r="38" fill="url(#dt)" stroke="#000" stroke-width="1.300"/><g fill="#999" opacity=".3" filter="url(#b2)"><circle cx="400" cy="535" r="4"/><circle cx="399" cy="559" r="4"/><circle cx="426" cy="546" r="4"/></g>`],
  tri: ['781 402 580 292', `<path fill="#000" opacity=".5" filter="url(#b6)" d="M942 560L1045 630l76 20 34-2 76-76-80-10-190-20z"/>
<path fill="#1c1c1c" stroke="#000" stroke-width="1.300" d="M942 546C942 528 958 512 985 510L1040 510L1136 517L1144 518L1216 538Q1232 543 1232 554V563Q1231 568 1226 573L1160 640Q1152 649 1140 649Q1132 649 1121 646L1045 627L962 583Q942 573 942 558z"/>
<path fill="#2e2e2e" stroke="#000" d="M942 546C942 528 958 512 985 510L1040 510L1136 517L1144 518L1216 538Q1232 543 1232 553L1155 632Q1149 637 1138 637Q1130 637 1121 635L1046 613L961 566Q942 555 942 546z"/>
<path fill="#545454" stroke="#000" stroke-width="1.300" d="M951 542C951 528 967 518 990 516L1040 516L1136 523L1216 543Q1226 547 1223 552L1152 625Q1148 629 1138 630Q1130 630 1122 629L1048 608L966 562Q951 554 951 542z"/>
<path stroke="#000" fill="none" d="M960 561v21M1042 609l1 15M1048 611v16M1121 631v15M1155 633v12M1136 517v6M1142 518v6M1216 538l-2 6M1232 553l-8 1M961 571l84 47 76 22"/>
<g stroke="#000" stroke-width="1.300"><path fill="#333" d="M1138 530l17 4-80 77-14-3z"/><path fill="#333" d="M1192 544l14 4-79 77-15-3z"/></g>
<path fill="#b4b4b8" stroke="#000" stroke-width=".7" d="M1141 541l4 1-69 69-6-1zM1194 558l4-2-73 69-5-2z"/><path stroke="#000" d="M1141 531l-1 10M1194 545v12"/>
<path fill="#222" stroke="#000" d="M991 545q2 8 18 8t18-8z"/><path fill="url(#dm)" stroke="#000" stroke-width="1.200" d="M973 530C973 512 988 499 1008 499S1044 512 1044 526Q1044 533 1036 538Q1024 546 1006 547Q982 546 975 536Q973 533 973 530z"/><path fill="none" stroke="#000" d="M973 530Q978 543 1004 543Q1032 543 1044 527"/>
<g fill="#aaa" opacity=".35" filter="url(#b2)"><circle cx="988" cy="512" r="4"/><circle cx="1020" cy="527" r="5"/></g>`]
};
define('model-view', `
:host{display:block;position:relative;overflow:hidden;min-width:0;min-height:0;
background:linear-gradient(to bottom,rgba(255,255,255,0) 50%,#fff 69%,#fff 85%,#f8f8fa),linear-gradient(165deg,#fff 10%,rgba(255,255,255,0) 52%),linear-gradient(to right,#e2e5ef,#dadeea)}
.model{display:block;width:100%;height:100%;position:absolute;inset:0}
.tag{position:absolute;left:21px;bottom:0;display:flex;flex-direction:column}
:host([view=left]) .tag,:host([view=tri]) .tag{left:19px}
.name{display:flex;align-items:center;gap:4px;height:18px;margin-left:-9px;font-size:12px;font-weight:700;color:#000}
:host([view=left]) .name,:host([view=tri]) .name{margin-left:-4px}
`, el => {
  const v = el.getAttribute('view'), m = MODELS[v];
  return `<svg class="model" viewBox="${m[0]}" preserveAspectRatio="xMidYMid meet" role="img" aria-label="Mask attach">
<defs><filter id="b6" x="-20%" y="-20%" width="140%" height="140%"><feGaussianBlur stdDeviation="6"/></filter><filter id="b2" x="-100%" y="-100%" width="300%" height="300%"><feGaussianBlur stdDeviation="3"/></filter>
<linearGradient id="dm" x1="0" y1="0" x2="1" y2="0"><stop offset="0" stop-color="#2a2a2a"/><stop offset=".5" stop-color="#3a3a3a"/><stop offset="1" stop-color="#262626"/></linearGradient>
<linearGradient id="sl"><stop offset="0" stop-color="#1f1f1f"/><stop offset=".5" stop-color="#343434"/><stop offset="1" stop-color="#1f1f1f"/></linearGradient>
<linearGradient id="slot" x1="0" y1="0" x2="0" y2="1"><stop offset="0" stop-color="#a9abb4"/><stop offset="1" stop-color="#d0d0d2"/></linearGradient>
<radialGradient id="dt"><stop offset="0" stop-color="#3c3c3c"/><stop offset="1" stop-color="#292929"/></radialGradient></defs>${m[1]}</svg>
<div class="tag"><svg width="70" height="80" viewBox="0 0 70 80" overflow="visible">${TRIADS[v]}</svg><div class="name">${v === 'tri' ? '' : ic('chain')}<span>*<slot></slot></span></div></div>`;
});

define('view-toolbar', `
:host{display:flex;height:22px}
icon-button{width:23px}icon-button[icon=down]{width:14px}
`, ib('zoomfit', 'Zoom to fit', 17) + ib('zoomarea', 'Zoom to area', 17) + ib('prevview', 'Previous view', 17) + ib('section', 'Section view', 17) +
  ib('orient', 'View orientation', 17) + ib('down', 'Orientation menu') + ib('display', 'Display style', 17) + ib('down', 'Display menu') +
  ib('glasses', 'Hide/show items', 17) + ib('down', 'Hide/show menu') + ib('ball', 'Edit appearance', 17) + ib('scene', 'Apply scene', 17) + ib('down', 'Scene menu') + ib('screen', 'View settings', 17) + ib('down', 'View settings menu'));

define('view-area', `
:host{display:grid;grid-template:1fr 1fr/1fr 1fr;gap:4px;background:#1d2340;position:relative;min-width:0}
.v,.h{position:absolute;background:#e4e8f0}
.v{left:calc(50% - 1px);width:2px;top:0;bottom:0}
.h{top:calc(50% - 1px);height:2px;left:0;right:0}
view-toolbar{position:absolute;left:137px;top:2px}
.win{position:absolute;right:6px;top:2px;display:flex}
.win icon-button{width:23px;height:22px}
`, `<model-view view="front">Front</model-view><model-view view="left">Left</model-view><model-view view="top">Top</model-view><model-view view="tri">Trimetric</model-view>
<div class="v"></div><div class="h"></div><view-toolbar></view-toolbar>
<div class="win">${ib('tileL', 'Left view')}${ib('tileR', 'Right view')}${ib('min', 'Minimise document')}${ib('restore', 'Restore document')}${ib('close', 'Close document')}</div>`);

define('task-pane', `
:host{display:flex;flex-direction:column;width:24px;border:1px solid #111;border-right:0;background:#111;gap:1px}
icon-button{height:23px;background:#a6a8ac;border:1px solid #e4e4e6;border-right:0}
icon-button.on{background:#eceef2}
`, ib('forum', 'Forum') + ib('home', 'Resources') + ib('library', 'Design library') + ib('explorer', 'File explorer') + ib('palette', 'View palette') + '<icon-button class="on" icon="ballb" label="Appearances"></icon-button>' + ib('propsheet', 'Custom properties'));

/* ---------- bottom bars ---------- */
define('sheet-tabs', `
:host{display:flex;height:16px;border-top:1px solid #000;border-bottom:1px solid #000;background:#e2e6ea;padding-left:2px;line-height:12px}
.nav{width:15px;background:#b2b5ba;border:1px solid #8a8e96;height:14px}
.tab{border:1px solid #111;border-top:0;background:#a9abaf;height:13px;width:108px;padding-right:3px;border-left:0;font-size:12px}
.tab.on{background:#eceef2;font-weight:700;width:56px;height:14px;margin-left:5px;border-left:1px solid #111;padding:0 0 2px;border-bottom:0}
`, `${['first', 'prev', 'next', 'last'].map(n => `<icon-button class="nav" icon="${n}" label="${n} tab"></icon-button>`).join('')}<button class="tab on">Model</button><button class="tab">Motion Study 1</button>`);

define('status-bar', `
:host{display:flex;align-items:center;height:18px;background:#d6d9dd;border-top:1px solid #f4f4f6;padding:0 6px 0 3px}
button{margin-left:auto;display:flex;align-items:center;gap:18px;margin-right:80px}
`, `<span>SolidWorks Student Edition - Academic Use Only</span><button type="button">MMGS ${ic('up')}</button>${ic('tag')}`);

define('task-bar', `
:host{display:flex;align-items:center;height:40px;background:linear-gradient(to right,#394e84,#3e5c90);color:#fff;line-height:17px;text-align:center}
nav{display:flex;gap:4px;flex:1}
nav button{width:58px;height:38px;display:grid;place-items:center;position:relative}
nav button.start{width:48px}
nav button.run{background:#6e7fa8;border:1px solid #9aa6c4}
nav button.act{background:#aab3cc;border:1px solid #e0e4ee}
.ad{width:28px;height:28px;display:grid;place-items:center;font-weight:700;font-size:15px}
.ps{background:#0c1240;border:2px solid #8ccff8;color:#8ccff8}
.ai{background:#2c1c04;border:2px solid #f79a1c;color:#f79a1c}
.badge{position:absolute;left:29px;top:20px;width:15px;height:15px;border-radius:50%;background:#c8242c;line-height:15px}
.sw{position:absolute;left:16px;top:10px;width:28px;font-weight:700;font-size:14px;line-height:18px;display:flex;justify-content:space-between}
.tray{display:flex;align-items:center;gap:8px;margin-right:15px}
.lang{width:24px;margin-right:16px}
.clock{margin-right:19px}
`, `<nav><button class="start" aria-label="Start">${ic('windows')}</button><button aria-label="Chrome">${ic('chrome')}</button><button aria-label="Internet Explorer">${ic('ie')}</button><button aria-label="File Explorer">${ic('files')}</button><button aria-label="Store">${ic('store')}</button>
<button class="run"><span class="ad ps">Ps</span></button><button><span class="ad ai">Ai</span></button><button class="run" aria-label="Spotify">${ic('spotify')}<span class="badge">2</span></button><button class="act">${ic('swcube')}<span class="sw"><span>S</span><span>W</span></span></button></nav>
<div class="tray">${ib('upw', 'Show hidden icons')}${ib('flag', 'Action centre')}${ib('dbtray', 'Dropbox')}${ib('battery', 'Power')}${ib('signal', 'Network')}${ib('volume', 'Volume')}</div>
<div class="lang">ENG<br>UK</div><div class="clock">11:06<br>28/04/2015</div>`);

define('notify-balloon', `
:host{display:block;width:264px;height:54px;background:#fff;border:1px solid #111;border-radius:8px;padding:9px 12px 0 11px}
.top{display:flex;align-items:center;height:20px}
h2{font:inherit;font-size:15px;line-height:20px;color:#1c1c9c;margin:0 auto 0 5px}
.top icon-button{margin-bottom:6px}
.top icon-button+icon-button{margin-left:9px}
p{margin:2px 0 0 21px;white-space:nowrap;color:#000}
.tail{position:absolute;left:230px;top:52px;display:block}
`, `<div class="top">${ic('dropbox')}<h2>Screenshot Added</h2>${ib('wrench', 'Settings', 11)}${ib('x', 'Dismiss')}</div><p>A screenshot was added to your Dropbox.</p>
<svg class="tail" width="20" height="20" viewBox="0 0 20 20"><path fill="#fff" d="M1 0h18v18z"/><path fill="none" stroke="#111" d="M.5 1L18.500 18.500V1"/></svg>`);

/* ---------- application shell ---------- */
define('cad-app', `
:host{display:flex;flex-direction:column;min-height:100vh;position:relative}
main{flex:1;display:grid;grid-template-columns:197px minmax(0,1fr);padding-right:5px;background:#33445c;position:relative}
command-tabs{position:absolute;left:0;top:-1px;z-index:3}
task-pane{position:absolute;right:0;top:60px}
notify-balloon{position:absolute;right:196px;bottom:39px;z-index:5}
`, `<title-bar></title-bar><cad-ribbon></cad-ribbon>
<main><feature-manager></feature-manager><view-area></view-area><command-tabs></command-tabs><task-pane></task-pane></main>
<sheet-tabs></sheet-tabs><status-bar></status-bar><task-bar></task-bar><notify-balloon role="status"></notify-balloon>`);
</script>
</body>
</html>
